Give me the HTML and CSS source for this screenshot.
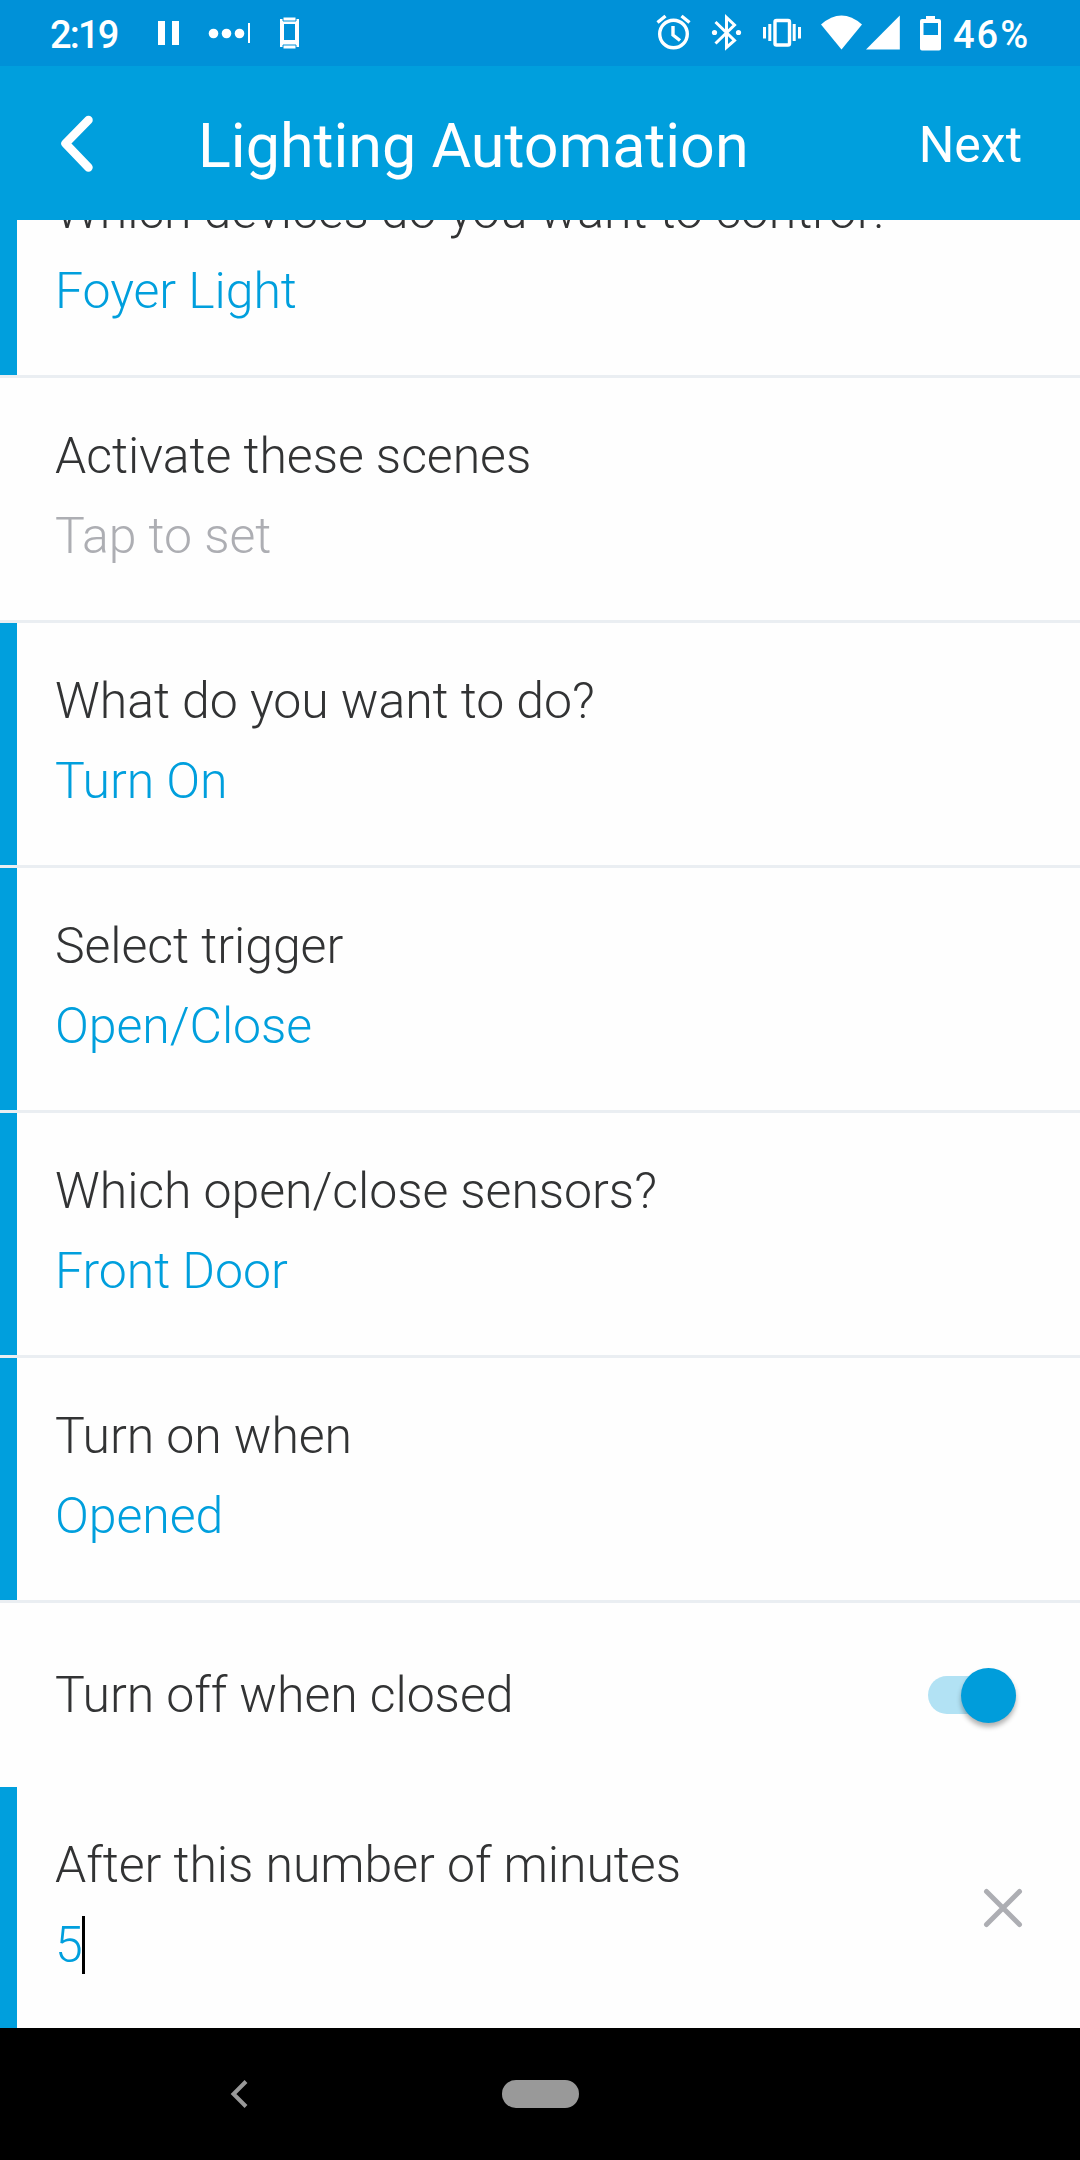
FILE: index.html
```
<!DOCTYPE html>
<html lang="en">
<head>
  <meta charset="UTF-8">
  <title>Lighting Automation</title>
  <link rel="stylesheet" href="styles.css">
</head>
<body>
  <div class="status-bar">
    <span class="clock">2:19</span>
    <svg class="notifications" width="170" height="66" viewBox="0 0 170 66" fill="#fff">
      <path d="M8 21h7v24H8zM22 21h7v24h-7z"/>
      <circle cx="63.5" cy="33.5" r="4.8"/>
      <circle cx="76.5" cy="33.5" r="4.8"/>
      <circle cx="89.5" cy="33.5" r="4.8"/>
      <path d="M98 23h2v20h-2z"/>
      <path fill-rule="evenodd" d="M130 19h19v28h-19zM134 24v16h11V24z"/>
      <path class="watch-strap" d="M133 17h13v4h-13zM133 45h13v4h-13z"/>
    </svg>
    <svg class="system-icons" width="300" height="66" viewBox="650 0 300 66" fill="none" stroke="#fff">
      <!-- alarm -->
      <circle cx="673.5" cy="34" r="13.8" stroke-width="3.4"/>
      <path stroke-width="3.4" d="M673 26v9l7 5.5M657.5 22.5l8-6.5M689.5 22.5l-8-6.5"/>
      <!-- bluetooth -->
      <path stroke-width="3" d="M715.5 22L734.5 40.5L726.5 47.5V17.5L734.5 25L715.5 43.5"/>
      <circle cx="714.5" cy="32.5" r="2.6" fill="#fff" stroke="none"/>
      <circle cx="738.5" cy="32.5" r="2.6" fill="#fff" stroke="none"/>
      <!-- vibrate -->
      <rect x="775" y="20.5" width="14.5" height="24.5" rx="1.5" stroke-width="3.4"/>
      <path stroke-width="3" d="M764.5 27v11.5M769.8 24v17M794.2 24v17M799.5 27v11.5"/>
      <!-- wifi, signal, battery -->
      <g fill="#fff" stroke="none">
        <path d="M821 24.5Q841.5 6.5 862 24.5L841.5 49.5z"/>
        <path d="M899.8 15.5V49.5H866z"/>
        <path fill-rule="evenodd" d="M926 16h9v3h4q2 0 2 2v27.5q0 2-2 2h-17q-2 0-2-2V21q0-2 2-2h4zM923.5 23v12H938V23z"/>
      </g>
    </svg>
    <span class="battery">46%</span>
  </div>

  <header class="app-bar">
    <svg class="back" width="40" height="64" viewBox="0 0 40 64">
      <path d="M31.5 9L8.5 32.5L31.5 56.5"/>
    </svg>
    <h1>Lighting Automation</h1>
    <span class="next">Next</span>
  </header>

  <main class="settings">
    <div class="row active">
      <div class="label">Which devices do you want to control?</div>
      <div class="value">Foyer Light</div>
    </div>
    <div class="row">
      <div class="label">Activate these scenes</div>
      <div class="value">Tap to set</div>
    </div>
    <div class="row active">
      <div class="label">What do you want to do?</div>
      <div class="value">Turn On</div>
    </div>
    <div class="row active">
      <div class="label">Select trigger</div>
      <div class="value">Open/Close</div>
    </div>
    <div class="row active">
      <div class="label">Which open/close sensors?</div>
      <div class="value">Front Door</div>
    </div>
    <div class="row active">
      <div class="label">Turn on when</div>
      <div class="value">Opened</div>
    </div>
    <div class="row toggle-row">
      <div class="label">Turn off when closed</div>
      <div class="switch"><div class="thumb"></div></div>
    </div>
    <div class="row active input-row">
      <div>
        <div class="label">After this number of minutes</div>
        <div class="value input">5<span class="caret"></span></div>
      </div>
      <svg class="clear" width="40" height="40" viewBox="0 0 40 40">
        <path d="M3.5 3.5l33 33M36.5 3.5l-33 33"/>
      </svg>
    </div>
  </main>

  <nav class="nav-bar">
    <svg class="nav-back" width="18" height="30" viewBox="0 0 18 30">
      <path d="M16 2.5L3.5 15L16 27.5"/>
    </svg>
    <div class="home-pill"></div>
  </nav>
</body>
</html>
```
FILE: styles.css
```
:root {
  --blue: #009fdd;
  --status-blue: #0091d8;
  --text: #323334;
  --muted: #adaeb3;
  --line: #eaeef2;
}

* {
  box-sizing: border-box;
}

body {
  margin: 0;
  width: 1080px;
  height: 2160px;
  overflow: hidden;
  display: flex;
  flex-direction: column;
  background: #fefefe;
  color: var(--text);
  font-family: Roboto, sans-serif;
}

svg {
  display: block;
  flex: none;
}

.status-bar {
  flex: none;
  display: flex;
  height: 66px;
  padding-left: 50px;
  background: var(--status-blue);
  color: #fff;
  font-size: 38px;
  font-weight: 500;
  line-height: 71px;
}

.clock {
  width: 100px;
  letter-spacing: -1.8px;
}

.watch-strap {
  stroke: var(--status-blue);
  stroke-width: 1;
}

.system-icons {
  margin-left: 330px;
}

.battery {
  margin-left: 3px;
  letter-spacing: 2px;
}

.app-bar {
  flex: none;
  display: flex;
  align-items: center;
  height: 154px;
  padding: 0 58px 0 57px;
  background: var(--blue);
  color: #fff;
}

.app-bar h1 {
  flex: 1;
  margin: 0 0 0 101px;
  font-size: 61px;
  font-weight: 400;
  line-height: 80px;
  padding-top: 6px;
}

.back path {
  fill: none;
  stroke: #fff;
  stroke-width: 8.5;
  stroke-linecap: round;
  stroke-linejoin: round;
}

.next {
  font-size: 50px;
  line-height: 80px;
  padding-top: 3px;
}

/* list is scrolled, so it is anchored to the bottom and the first row is cut off */
.settings {
  flex: 1;
  min-height: 0;
  overflow: hidden;
  display: flex;
  flex-direction: column;
  justify-content: flex-end;
}

.row {
  flex: none;
  display: flex;
  flex-direction: column;
  height: 242px;
  padding: 38px 57px 0 55px;
  font-size: 50px;
  font-weight: 300;
  letter-spacing: -0.06px;
  line-height: 80px;
}

.row + .row {
  height: 245px;
  border-top: 3px solid var(--line);
}

.value {
  color: var(--muted);
}

.active {
  background: linear-gradient(var(--blue), var(--blue)) 0 0 / 17px 100% no-repeat;
}

.active .value {
  color: var(--blue);
}

.row.toggle-row {
  flex-direction: row;
  align-items: center;
  justify-content: space-between;
  height: 187px;
  padding: 0 64px 0 55px;
}

.switch {
  display: flex;
  align-items: center;
  justify-content: flex-end;
  width: 88px;
  height: 38px;
  border-radius: 19px;
  background: #b2e2f4;
}

.thumb {
  flex: none;
  width: 55px;
  height: 55px;
  border-radius: 50%;
  background: #009ddb;
  box-shadow: 0 4px 5px rgba(0, 0, 0, 0.3);
}

.row.input-row {
  flex-direction: row;
  justify-content: space-between;
  height: 241px;
  border-top: none;
}

.input {
  display: flex;
}

.caret {
  width: 3px;
  height: 58px;
  margin: 11px 0 0 -1px;
  background: #000;
}

.clear {
  margin-top: 63px;
}

.clear path {
  fill: none;
  stroke: var(--muted);
  stroke-width: 5;
  stroke-linecap: round;
}

.nav-bar {
  flex: none;
  display: flex;
  align-items: center;
  height: 132px;
  padding-left: 230px;
  background: #000;
}

.nav-back path {
  fill: none;
  stroke: #999;
  stroke-width: 4;
}

.home-pill {
  width: 77px;
  height: 28px;
  margin-left: 254px;
  border-radius: 14px;
  background: #999;
}
```
